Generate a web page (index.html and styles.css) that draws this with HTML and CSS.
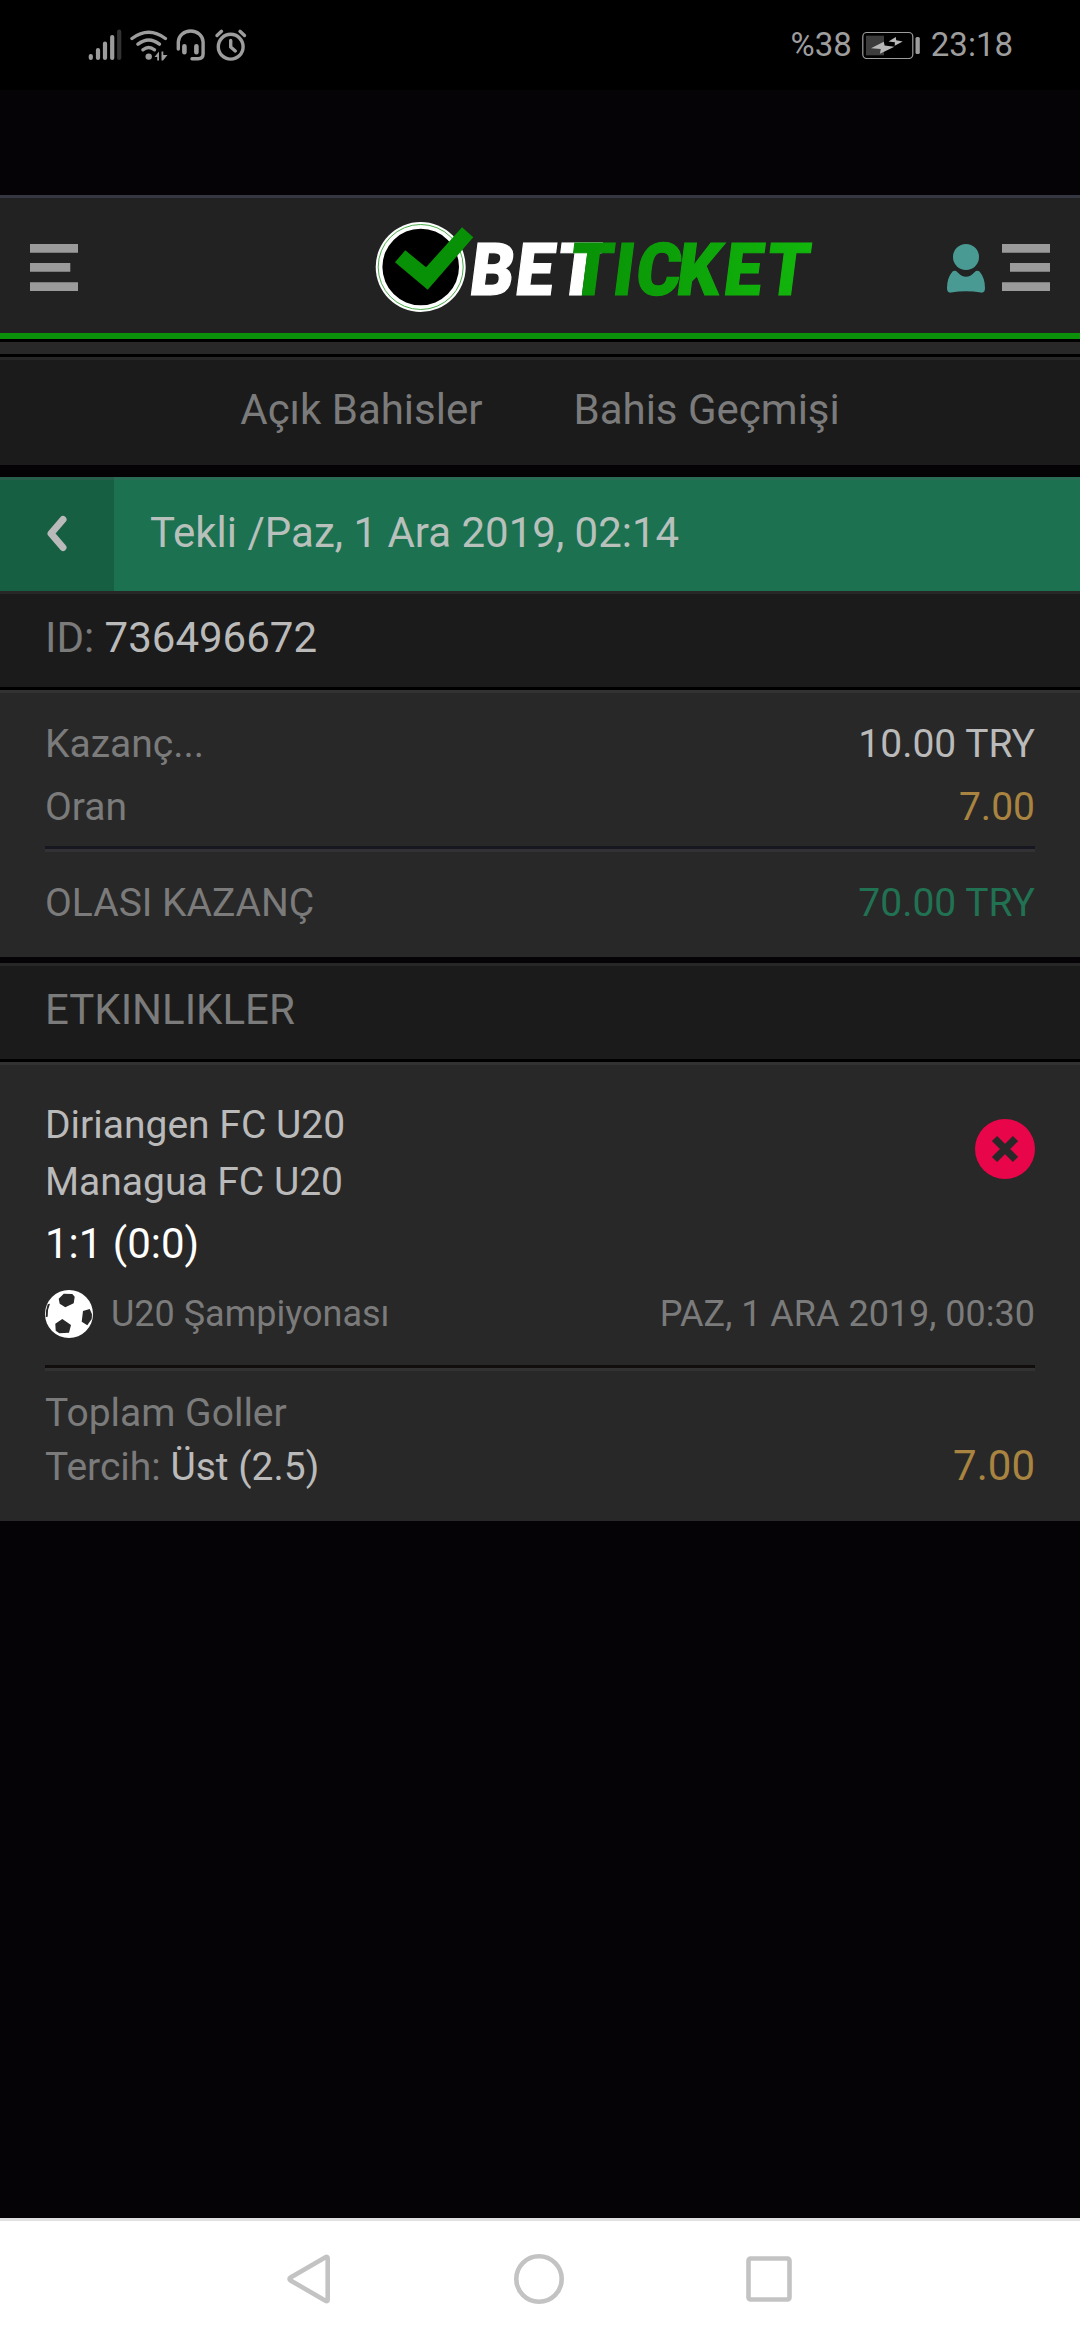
FILE: index.html
```html
<!DOCTYPE html>
<html lang="tr">
<head>
<meta charset="utf-8">
<title>Betticket</title>
<link rel="stylesheet" href="styles.css">
</head>
<body>
<div class="status-bar">
  <svg class="status-icons" width="160" height="34" viewBox="88 28 160 34" fill="none" stroke="#9d9d9d" stroke-width="3.4" stroke-linecap="round" stroke-linejoin="round">
    <g stroke-width="4.2"><path d="M90.8 56v2M98 50v8M105 43.500v14.500M112.200 37v21"/><path stroke="#333" d="M119.200 31.700v26.300"/></g>
    <path d="M132 38.500Q148.700 26 165.400 38.500M138 44.200Q148.700 35.800 159.400 44.200M143 49.800Q148.700 45 154.400 49.800"/>
    <circle cx="148.700" cy="56.600" r="3.200" fill="#9d9d9d" stroke="none"/>
    <path d="M154.500 57l4.500-5.500v9h-1.800V57zM161.500 51.500h1.800v3.500h4.200l-4.500 5.500h-1.500z" fill="#9d9d9d" stroke="none"/>
    <path d="M178.300 49V42a12.400 11 0 0 1 24.800 0V54q0 4.700-5 4.700H192"/>
    <path stroke-width="4.600" d="M184.400 46.300v6M196.400 46.300v6"/>
    <circle cx="230.700" cy="46.700" r="12.400"/>
    <path d="M217 35.500l4.500-4.200M240 31.300l4.500 4.200M230.700 40.500V47l4.600 4"/>
  </svg>
  <div class="status-right">
    <span>%38</span>
    <svg width="59" height="28" viewBox="862 31 59 28">
      <rect x="862.800" y="32.500" width="50" height="26" rx="4" fill="none" stroke="#9d9d9d" stroke-width="1.200"/>
      <path fill="#3c3c3c" d="M866 35.700h18v19.600h-18z"/>
      <rect x="915.500" y="37" width="4.300" height="17" rx="1.500" fill="#9d9d9d"/>
      <path fill="#b8b8b8" d="M871 48.300l12.800-6.500.8 3.600 9.800 1.400-14.500 7 .9-4.800zM888.500 41.500l7.300-4.400.4 3.200 6.500 1.200-8 4.200.2-3.400z"/>
    </svg>
    <span class="clock">23:18</span>
  </div>
</div>

<header class="header">
  <svg width="48" height="47" viewBox="0 0 48 47" fill="#9b9b9b"><path d="M0 0h48v8.700H0zM0 19h40.300v8.700H0zM0 38.300h48V47H0z"/></svg>
  <svg class="logo" width="450" height="100" viewBox="370 217 450 100">
    <defs><linearGradient id="green" gradientUnits="userSpaceOnUse" x1="100" y1="0" x2="365" y2="0"><stop offset="0" stop-color="#089006"/><stop offset="1" stop-color="#12b70c"/></linearGradient></defs>
    <circle cx="420.700" cy="267" r="45" fill="#fff"/>
    <circle cx="420.700" cy="267" r="42.500" fill="none" stroke="#4aad4a" stroke-width="1"/>
    <circle cx="420.700" cy="267" r="38.300"/>
    <path fill="#089006" d="M395 262.300l10.300-12 20.700 17 36-40 11.300 10-45.600 52.400z"/>
    <g class="wordmark" transform="matrix(.93 0 -.128 1 470 295.400)">
      <text fill="#fff" stroke="#fff" x="-2.500 46.600 90.600" y="0">BET</text>
      <text fill="url(#green)" stroke="url(#green)" x="104.200 151.500 176 219.800 270.600 315.500" y="0">TICKET</text>
    </g>
  </svg>
  <div class="account">
    <svg width="40" height="50" viewBox="946 242 40 50" fill="#4a9a94"><circle cx="966" cy="256" r="13"/><path d="M952.500 270.600q2.500-2 5 .6q8.500 9 17 0q2.500-2.600 5-.6q5.500 6.400 5.500 16.500 0 5-4 4.500-15-2.600-30 0-4 .5-4-4.500 0-10.100 5.500-16.500z"/></svg>
    <svg width="48" height="47" viewBox="0 0 48 47" fill="#9b9b9b"><path d="M0 0h48v8.700H0zM8 19h40v8.700H8zM0 38.300h48V47H0z"/></svg>
  </div>
</header>
<div class="strip"></div>
<nav class="tabs"><a>Açık Bahisler</a><a>Bahis Geçmişi</a></nav>

<main>
  <div class="ticket-bar">
    <div class="back"><svg width="22" height="37" viewBox="0 0 22 37" fill="none" stroke="#bababa" stroke-width="7" stroke-linecap="round" stroke-linejoin="round"><path d="M17 4.500L5 18.500l12 14"/></svg></div>
    <div class="ticket-title">Tekli /Paz, 1 Ara 2019, 02:14</div>
  </div>
  <div class="section-head">ID: <span class="light">736496672</span></div>
  <section class="totals">
    <div class="row"><span>Kazanç...</span><span class="light">10.00 TRY</span></div>
    <div class="row"><span>Oran</span><span class="gold">7.00</span></div>
    <div class="row payout"><span>OLASI KAZANÇ</span><span class="win">70.00 TRY</span></div>
  </section>
  <div class="section-head events-head">ETKINLIKLER</div>
  <section class="event">
    <div class="match">
      <div class="teams"><div>Diriangen FC U20</div><div>Managua FC U20</div></div>
      <svg class="lost" width="60" height="60" viewBox="0 0 60 60"><circle cx="30" cy="30" r="30" fill="#e90549"/><path d="M19.500 19.500l21 21m0-21l-21 21" stroke="#282828" stroke-width="7.400"/></svg>
    </div>
    <div class="score">1:1 (0:0)</div>
    <div class="league">
      <svg width="48" height="48" viewBox="0 0 48 48"><circle cx="24" cy="24" r="24" fill="#fff"/><path fill="#282828" d="M13.700 8.700l5-5 8.600.3 2.400 2.700-1 6.600-8.400 4-5.600-3.600zM17.300 29l8.700 6-2 7.700-9.700.6-3.600-2.600-.4-7zM38 21l6.700-2 2.300 5.300-.3 4.700-4.400 6.300-5.600-3.600zM2.700 14.300l2.300-.6-2 6.300-.3 6.700-1.900.3.200-6.300z"/></svg>
      <span>U20 Şampiyonası</span>
      <span class="date">PAZ, 1 ARA 2019, 00:30</span>
    </div>
    <div class="pick">
      <div><div>Toplam Goller</div><div>Tercih: <span class="light">Üst (2.5)</span></div></div>
      <span class="gold odds">7.00</span>
    </div>
  </section>
</main>

<footer class="system-nav">
  <svg width="44" height="50" viewBox="0 0 44 50"><path d="M40.700 4.500v41q0 2.500-2.200 1.200L3.600 26.500q-2.200-1.500 0-3L38.500 3.300q2.200-1.300 2.200 1.200z"/></svg>
  <svg width="50" height="50" viewBox="0 0 50 50"><circle cx="25" cy="25" r="22.700"/></svg>
  <svg width="46" height="46" viewBox="0 0 46 46"><rect x="2.500" y="2.500" width="41" height="41" rx="2"/></svg>
</footer>
</body>
</html>
```
FILE: styles.css
```css
* { box-sizing: border-box; }
body {
  margin: 0;
  width: 1080px;
  height: 2340px;
  display: flex;
  flex-direction: column;
  background: #050305;
  color: #7b7b7b;
  font-family: Roboto, "Noto Sans", sans-serif;
  font-size: 39px;
}
svg { display: block; flex: none; }
main { flex: 1; }

.status-bar {
  height: 90px;
  padding: 28px 67px 0 88px;
  display: flex;
  justify-content: space-between;
  align-items: flex-start;
  background: #000;
}
.status-right {
  display: flex;
  align-items: center;
  margin-top: 3px;
  gap: 10px;
  height: 28px;
  color: #9d9d9d;
  font-size: 33px;
  line-height: 30px;
}

.header {
  height: 144px;
  margin-top: 105px;
  padding: 4px 30px 0;
  display: flex;
  align-items: center;
  background: #222;
  border-top: 3px solid #353843;
  border-bottom: 6px solid #0c910b;
}
.logo { margin: -1px auto 0 292px; }
.wordmark { font-size: 73px; font-weight: 900; stroke-width: 1.2px; }
.account { display: flex; align-items: center; gap: 16px; }
.strip { height: 15px; border-top: 3px solid #000; background: #282828; }

.tabs {
  height: 111px;
  display: flex;
  justify-content: center;
  gap: 91px;
  border-top: 3px solid #000;
  box-shadow: inset 0 3px #272727;
  padding-top: 3px;
  background: #1b1b1b;
  font-size: 42px;
  line-height: 99px;
}

.ticket-bar {
  height: 114px;
  margin-top: 12px;
  display: flex;
  background: #1c7151;
  box-shadow: inset 0 3px #286c55;
  color: #b8c0bc;
  font-size: 42px;
}
.back {
  width: 114px;
  padding-top: 2px;
  display: grid;
  place-items: center;
  background: #175f43;
  border-top: 3px solid #275f4c;
}
.back svg { margin-top: -6px; }
.ticket-title { padding: 3px 36px 0; line-height: 105px; }

.section-head {
  height: 99px;
  padding: 0 45px;
  border-top: 3px solid #272727;
  border-bottom: 3px solid #000;
  background: #1b1b1b;
  font-size: 42px;
  line-height: 87px;
}
.events-head { margin-top: 6px; }
.light { color: #bababa; }
.gold { color: #a98440; }
.win { color: #217252; }

.totals {
  height: 267px;
  padding: 20px 45px 0;
  background: #282828;
  border-top: 3px solid #323232;
}
.row { display: flex; justify-content: space-between; line-height: 63px; }
.payout {
  margin-top: 7px;
  border-top: 3px solid #161720;
  box-shadow: inset 0 3px #323235;
  padding-top: 3px;
  line-height: 102px;
}

.event {
  height: 459px;
  padding: 32px 45px 0;
  background: #282828;
  border-top: 3px solid #323232;
}
.match {
  display: flex;
  justify-content: space-between;
  align-items: flex-start;
  color: #bababa;
  line-height: 57px;
}
.lost { margin-top: 22px; }
.score { color: #fff; font-size: 42px; line-height: 66px; }
.league {
  height: 74px;
  display: flex;
  align-items: center;
  gap: 18px;
  font-size: 36px;
}
.date { margin-left: auto; }
.pick {
  margin-top: 14px;
  padding-top: 18px;
  display: flex;
  justify-content: space-between;
  align-items: flex-end;
  border-top: 3px solid #120e0e;
  box-shadow: inset 0 3px #323232;
  line-height: 54px;
}
.odds { padding-bottom: 1px; font-size: 42px; }

.system-nav {
  height: 122px;
  display: flex;
  justify-content: space-between;
  align-items: center;
  padding: 0 288px 3px 287px;
  background: #fff;
  border-top: 3px solid #e0e0e0;
}
.system-nav svg { fill: none; stroke: #c3c3c3; stroke-width: 4.6px; }
```
